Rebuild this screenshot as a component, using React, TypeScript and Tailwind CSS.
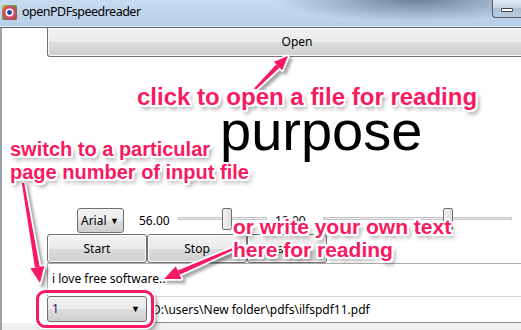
import React from "react";

const outline =
  "[text-shadow:-2px_-2px_0_#fff,2px_-2px_0_#fff,-2px_2px_0_#fff,2px_2px_0_#fff,0_-2px_0_#fff,0_2px_0_#fff,-2px_0_0_#fff,2px_0_0_#fff,3px_4px_4px_rgba(0,0,0,0.45)]";

function Arrow({ x1, y1, x2, y2, len = 15, hw = 7 }: { x1: number; y1: number; x2: number; y2: number; len?: number; hw?: number }) {
  const dx = x2 - x1;
  const dy = y2 - y1;
  const L = Math.hypot(dx, dy);
  const ux = dx / L;
  const uy = dy / L;
  const bx = x2 - ux * len;
  const by = y2 - uy * len;
  const px = -uy;
  const py = ux;
  const head = `${x2},${y2} ${bx + px * hw},${by + py * hw} ${bx - px * hw},${by - py * hw}`;
  const s0 = 1.2;
  const s1 = 2.4;
  const shaft = `${x1 + px * s0},${y1 + py * s0} ${bx + px * s1},${by + py * s1} ${bx - px * s1},${by - py * s1} ${x1 - px * s0},${y1 - py * s0}`;
  return (
    <g>
      <g transform="translate(3,3)" opacity="0.35" filter="url(#blur)">
        <polygon points={shaft} fill="#000" stroke="#000" strokeWidth="3" strokeLinejoin="round" />
        <polygon points={head} fill="#000" stroke="#000" strokeWidth="3" strokeLinejoin="round" />
      </g>
      <polygon points={shaft} fill="#fff" stroke="#fff" strokeWidth="3.5" strokeLinejoin="round" />
      <polygon points={head} fill="#fff" stroke="#fff" strokeWidth="3.5" strokeLinejoin="round" />
      <polygon points={shaft} fill="#f81a60" />
      <polygon points={head} fill="#f81a60" />
    </g>
  );
}

function Slider({ width, thumb }: { width: number; thumb: number }) {
  return (
    <div className="relative h-[25px]" style={{ width }}>
      <div className="absolute left-0 right-0 top-[9px] h-[3px] border border-[#c4c4c4] bg-[#eceeee]" />
      <div
        className="absolute top-0 h-[22px] w-[10px] rounded-[2px] border border-[#6f6f6f] bg-[linear-gradient(90deg,#f3f3f3,#dcdcdc)]"
        style={{ left: thumb }}
      />
    </div>
  );
}

function WinButton({ label, w }: { label: string; w: number }) {
  return (
    <div
      className="flex h-[29px] items-center justify-center rounded-[3px] border border-[#707070] bg-[linear-gradient(#f2f2f2_0%,#ebebeb_50%,#dddddd_50%,#cfcfcf_100%)] text-[12px] text-black shadow-[inset_0_0_0_1px_#fcfcfc]"
      style={{ width: w }}
    >
      {label}
    </div>
  );
}

export default function App() {
  return (
    <div className="relative h-[330px] w-[521px] overflow-hidden bg-white font-['Noto_Sans',sans-serif] text-[12px] text-black">
      {/* title bar */}
      <div className="flex h-[27px] items-start bg-[radial-gradient(ellipse_140px_22px_at_80%_0%,#6d8197_0%,rgba(109,129,151,0)_100%),linear-gradient(#c7dbf0,#b8cfe8)] border-b border-[#e4eef8]">
        <div className="ml-[2px] mt-[5px]">
          <svg width="15" height="15" viewBox="0 0 15 15">
            <defs>
              <linearGradient id="ig" x1="0" y1="0" x2="1" y2="1">
                <stop offset="0" stopColor="#b6c63a" />
                <stop offset="0.5" stopColor="#6f8a3f" />
                <stop offset="1" stopColor="#b53a3c" />
              </linearGradient>
            </defs>
            <rect x="0" y="0" width="15" height="15" rx="2" fill="url(#ig)" />
            <circle cx="7.5" cy="7.5" r="7" fill="#cf4b66" />
            <circle cx="7.5" cy="7.5" r="4" fill="#ffffff" />
            <circle cx="7.5" cy="7.5" r="2.4" fill="#233e92" />
          </svg>
        </div>
        <div className="ml-[5px] mt-[3px] text-[12.5px] tracking-[-0.5px] text-black">openPDFspeedreader</div>
        <div className="ml-auto flex h-[18px] w-[29px] items-center justify-center rounded-bl-[4px] border border-t-0 border-r-0 border-[#4f5c6b] bg-[linear-gradient(#e1e9f3,#c3d2e3_50%,#aebfd3_50%,#bccbdd)]">
          <div className="mt-[3px] h-[4px] w-[12px] rounded-[1px] border border-[#3a4654] bg-white" />
        </div>
      </div>
      <div className="h-px bg-[#5a626b]" />

      {/* body */}
      <div className="flex h-[302px] flex-col border-l-2 border-[#98a2ad]">
        {/* Open button */}
        <div className="ml-[45px] flex h-[29px] w-[500px] items-center justify-center rounded-b-[3px] border border-t-0 border-[#707070] bg-[linear-gradient(#f2f2f2_0%,#ebebeb_50%,#dddddd_50%,#cfcfcf_100%)] text-[12px] shadow-[inset_0_0_0_1px_#fbfbfb]">
          Open
        </div>

        {/* display area */}
        <div className="flex h-[151px] items-center pb-[3px] pl-[218px]">
          <div className="font-['Liberation_Sans',Arial,sans-serif] text-[56px] leading-[56px] text-black">purpose</div>
        </div>

        {/* controls */}
        <div className="flex h-[25px] items-start">
          <div className="ml-[75px] flex h-[25px] w-[47px] items-center justify-between rounded-[3px] border border-[#707070] bg-[linear-gradient(#f2f2f2_0%,#ebebeb_50%,#dddddd_50%,#cfcfcf_100%)] pl-[3px] pr-[4px]">
            <span>Arial</span>
            <span className="text-[9px]">▼</span>
          </div>
          <div className="ml-[15px] flex h-[25px] w-[39px] items-center">56.00</div>
          <Slider width={89} thumb={44} />
          <div className="flex h-[25px] w-[56px] items-center pl-[8px]">12.00</div>
          <Slider width={189} thumb={120} />
        </div>

        {/* buttons */}
        <div className="flex h-[30px] pt-px pl-[45px]">
          <WinButton label="Start" w={100} />
          <WinButton label="Stop" w={100} />
          <WinButton label="Pause" w={80} />
        </div>

        {/* text box */}
        <div className="ml-[45px] flex h-[33px] items-center border-l border-t border-[#abadb3] pl-[4px] pb-[3px]">
          i love free software..
        </div>

        {/* bottom row */}
        <div className="flex h-[27px] items-start">
          <div className="ml-[45px] flex h-[26px] w-[100px] items-center justify-between rounded-[3px] border border-[#707070] bg-[linear-gradient(#f2f2f2_0%,#ebebeb_50%,#dddddd_50%,#cfcfcf_100%)] pl-[4px] pr-[6px]">
            <span className="text-[#1b1b5a]">1</span>
            <span className="text-[9px]">▼</span>
          </div>
          <div className="ml-[2px] flex h-[27px] flex-1 items-center border-b border-t border-[#d6d6d6] border-b-[#8e8e8e] pl-[3px]">
            D:\users\New folder\pdfs\ilfspdf11.pdf
          </div>
        </div>

        <div className="flex-1 bg-[#f0f0f0]" />
      </div>

      {/* annotations overlay */}
      <svg className="pointer-events-none absolute left-0 top-0" width="521" height="330">
        <defs>
          <filter id="blur" x="-20%" y="-20%" width="140%" height="140%">
            <feGaussianBlur stdDeviation="1.5" />
          </filter>
        </defs>
        <Arrow x1={255} y1={89} x2={288} y2={56} len={14} hw={6} />
        <Arrow x1={23} y1={183} x2={40} y2={283} len={16} hw={7} />
        <Arrow x1={233} y1={249} x2={164} y2={279} len={16} hw={7} />
      </svg>

      <div className="pointer-events-none absolute left-[36px] top-[290px] h-[38px] w-[118px] rounded-[9px] border-[3.5px] border-[#f81a60] shadow-[0_0_0_1.5px_#fff,inset_0_0_0_1.5px_#fff,3px_3px_4px_rgba(0,0,0,0.4)]" />

      <div
        className={`pointer-events-none absolute left-[137px] top-[85px] whitespace-nowrap font-['Liberation_Sans',Arial,sans-serif] text-[24px] font-bold leading-[24px] text-[#f81a60] ${outline}`}
      >
        click to open a file for reading
      </div>
      <div
        className={`pointer-events-none absolute left-[10px] top-[138px] whitespace-nowrap font-['Liberation_Sans',Arial,sans-serif] text-[20px] font-bold leading-[23px] text-[#f81a60] ${outline}`}
      >
        switch to a particular
        <br />
        page number of input file
      </div>
      <div
        className={`pointer-events-none absolute left-[233px] top-[215px] whitespace-nowrap font-['Liberation_Sans',Arial,sans-serif] text-[21px] font-bold leading-[23px] text-[#f81a60] ${outline}`}
      >
        or write your own text
        <br />
        here for reading
      </div>
    </div>
  );
}
